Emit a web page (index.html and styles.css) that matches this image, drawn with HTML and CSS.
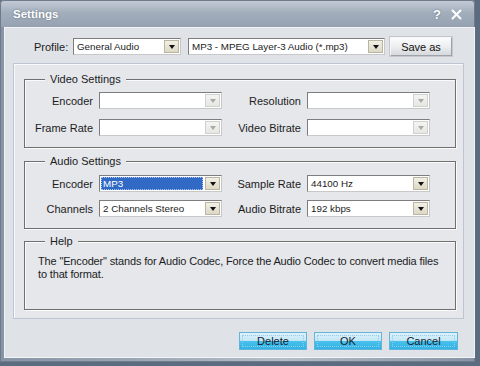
FILE: index.html
```html
<!DOCTYPE html>
<html lang="en">
<head>
    <meta charset="UTF-8">
    <title>Settings</title>
    <link rel="stylesheet" href="styles.css">
</head>
<body>
    <div class="window">
        <!-- title bar -->
        <div class="titlebar">
            <span class="title">Settings</span>
            <span class="title-help">?</span>
            <svg class="title-close" width="11" height="11" viewBox="0 0 11 11">
                <path d="M1.5 1.5 L9.5 9.5 M9.5 1.5 L1.5 9.5" stroke="#fff" stroke-width="2" stroke-linecap="round"/>
            </svg>
        </div>

        <div class="frame">
            <div class="content">
                <!-- profile -->
                <div class="profile-row">
                    <span class="profile-label">Profile:</span>
                    <div class="combo combo-profile">
                        <span class="combo-text">General Audio</span>
                        <span class="combo-btn"><i class="arrow"></i></span>
                    </div>
                    <div class="combo combo-format">
                        <span class="combo-text">MP3 - MPEG Layer-3 Audio (*.mp3)</span>
                        <span class="combo-btn"><i class="arrow"></i></span>
                    </div>
                    <button class="save-btn">Save as</button>
                </div>

                <div class="panel">
                    <!-- video -->
                    <div class="group">
                        <span class="group-title">Video Settings</span>
                        <div class="fields fields-video">
                            <span class="field-label">Encoder</span>
                            <div class="combo disabled"><span class="combo-text"></span><span class="combo-btn"><i class="arrow"></i></span></div>
                            <span class="field-label">Resolution</span>
                            <div class="combo disabled"><span class="combo-text"></span><span class="combo-btn"><i class="arrow"></i></span></div>
                            <span class="field-label">Frame Rate</span>
                            <div class="combo disabled"><span class="combo-text"></span><span class="combo-btn"><i class="arrow"></i></span></div>
                            <span class="field-label">Video Bitrate</span>
                            <div class="combo disabled"><span class="combo-text"></span><span class="combo-btn"><i class="arrow"></i></span></div>
                        </div>
                    </div>

                    <!-- audio -->
                    <div class="group group-audio">
                        <span class="group-title">Audio Settings</span>
                        <div class="fields fields-audio">
                            <span class="field-label">Encoder</span>
                            <div class="combo focused"><span class="combo-text"><span class="selected">MP3</span></span><span class="combo-btn"><i class="arrow"></i></span></div>
                            <span class="field-label">Sample Rate</span>
                            <div class="combo"><span class="combo-text">44100 Hz</span><span class="combo-btn"><i class="arrow"></i></span></div>
                            <span class="field-label">Channels</span>
                            <div class="combo"><span class="combo-text">2 Channels Stereo</span><span class="combo-btn"><i class="arrow"></i></span></div>
                            <span class="field-label">Audio Bitrate</span>
                            <div class="combo"><span class="combo-text">192 kbps</span><span class="combo-btn"><i class="arrow"></i></span></div>
                        </div>
                    </div>

                    <!-- help -->
                    <div class="group group-help">
                        <span class="group-title">Help</span>
                        <p class="help-text">The "Encoder" stands for Audio Codec, Force the Audio Codec to convert media files to that format.</p>
                    </div>
                </div>

                <div class="actions">
                    <button class="action-btn">Delete</button>
                    <button class="action-btn">OK</button>
                    <button class="action-btn action-cancel">Cancel</button>
                </div>
            </div>
        </div>
    </div>
</body>
</html>
```

FILE: styles.css
```css
* {
    margin: 0;
    padding: 0;
    box-sizing: border-box;
}

body {
    background: #5b6b80;
    font-family: 'Liberation Sans', Arial, sans-serif;
    font-size: 11px;
    color: #1c1c1c;
}

.window {
    width: 475px;
    height: 362px;
    display: flex;
    flex-direction: column;
    background: #a3adba;
    border-radius: 4px 4px 0 0;
    overflow: hidden;
}

/* title bar */
.titlebar {
    height: 27px;
    flex: none;
    display: flex;
    align-items: center;
    padding: 0 12px 0 12px;
    background: linear-gradient(#c2cad4, #a3aebc 45%, #95a1b1);
    border: 1px solid #6f7b8b;
    border-bottom: none;
    border-radius: 4px 4px 0 0;
}

.title {
    flex: 1;
    color: #fff;
    font-weight: bold;
    font-size: 11.5px;
    text-shadow: 0 0 2px #5d6a7b;
}

.title-help {
    color: #fff;
    font-weight: bold;
    font-size: 13px;
    margin-right: 10px;
    text-shadow: 0 0 2px #5d6a7b;
}

.title-close {
    display: block;
}

.frame {
    flex: 1;
    display: flex;
    padding: 0 3px 3px;
    border: 1px solid #6f7b8b;
    border-top: none;
    background: linear-gradient(90deg, #8794a5, #b4bcc7 60%, #8794a5);
}

.content {
    flex: 1;
    background: #dfe2e6;
    border: 1px solid #f3f4f6;
    padding: 9px 10px 0 0;
}

/* profile row */
.profile-row {
    display: flex;
    align-items: center;
    height: 19px;
    padding-left: 29px;
}

.profile-label {
    width: 39px;
}

.combo {
    display: flex;
    height: 17px;
    background: #fff;
    border: 1px solid;
    border-color: #7d7d7d #c8c8c8 #c8c8c8 #7d7d7d;
}

.combo-profile {
    width: 108px;
}

.combo-format {
    width: 197px;
    margin-left: 7px;
}

.combo-text {
    flex: 1;
    padding-left: 3px;
    font-size: 9.8px;
    line-height: 15px;
    white-space: nowrap;
    overflow: hidden;
}

.combo-btn {
    width: 15px;
    margin: 1px;
    display: flex;
    align-items: center;
    justify-content: center;
    background: linear-gradient(#f2f0e6, #dcd8c4);
    border: 1px solid #b9b5a2;
}

.arrow {
    width: 0;
    height: 0;
    border-left: 3.5px solid transparent;
    border-right: 3.5px solid transparent;
    border-top: 4px solid #111;
}

.combo.disabled .combo-btn {
    background: linear-gradient(#f4f4f2, #e6e6e2);
    border-color: #d0d0cc;
}

.combo.disabled .arrow {
    border-top-color: #a8a8a8;
}

.combo.focused .combo-text {
    padding: 1px;
}

.selected {
    display: block;
    height: 13px;
    line-height: 13px;
    padding-left: 2px;
    background: #316ac5;
    color: #fff;
    outline: 1px dotted #a9c4ee;
    outline-offset: -1px;
}

.save-btn {
    width: 62px;
    height: 19px;
    margin-left: 5px;
    font-family: inherit;
    font-size: 11px;
    color: #111;
    background: linear-gradient(#fbfbfb, #eceef0 50%, #d6d9dd);
    border: 1px solid;
    border-color: #f6f6f6 #9ea3a9 #9ea3a9 #f6f6f6;
    box-shadow: 0 0 0 1px #c4c8cd;
}

/* settings panel */
.panel {
    margin: 7px 0 0 8px;
    width: 451px;
    padding: 15px 0 8px 10px;
    background: #e5e7eb;
    border: 1px solid #bcc5d1;
    box-shadow: inset 1px 1px 0 #f8f9fa;
}

.group {
    width: 432px;
    border: 1px solid #6f6f6f;
    box-shadow: inset 1px 1px 0 #fafafa, 1px 1px 0 #fafafa;
    padding-bottom: 11px;
}

.group-audio {
    margin-top: 13px;
}

.group-help {
    margin-top: 12px;
    padding-bottom: 0;
}

.group-title {
    display: block;
    width: fit-content;
    margin: -8px 0 0 20px;
    padding: 0 5px;
    line-height: 14px;
    background: #e5e7eb;
}

.fields {
    display: grid;
    grid-template-columns: 68px 123px 73px 123px;
    column-gap: 6px;
    align-items: center;
}

.fields-video {
    margin-top: 6px;
    row-gap: 10px;
}

.fields-audio {
    margin-top: 7px;
    row-gap: 8px;
}

.field-label {
    text-align: right;
    white-space: nowrap;
}

.help-text {
    height: 54px;
    margin-top: 7px;
    padding: 0 16px 0 13px;
    line-height: 13px;
    letter-spacing: -0.15px;
}

/* bottom buttons */
.actions {
    display: flex;
    justify-content: flex-end;
    gap: 7px;
    margin-top: 13px;
    padding-right: 6px;
}

.action-btn {
    width: 68px;
    height: 18px;
    font-family: inherit;
    font-size: 11px;
    color: #14222e;
    background: linear-gradient(#def2fb, #c2e6f6 48%, #48c0ec 52%, #31b3e6);
    border: 1px solid #64b3d9;
    outline: 1px dotted #8fcde8;
    outline-offset: -4px;
}

.action-cancel {
    width: 69px;
}
```
